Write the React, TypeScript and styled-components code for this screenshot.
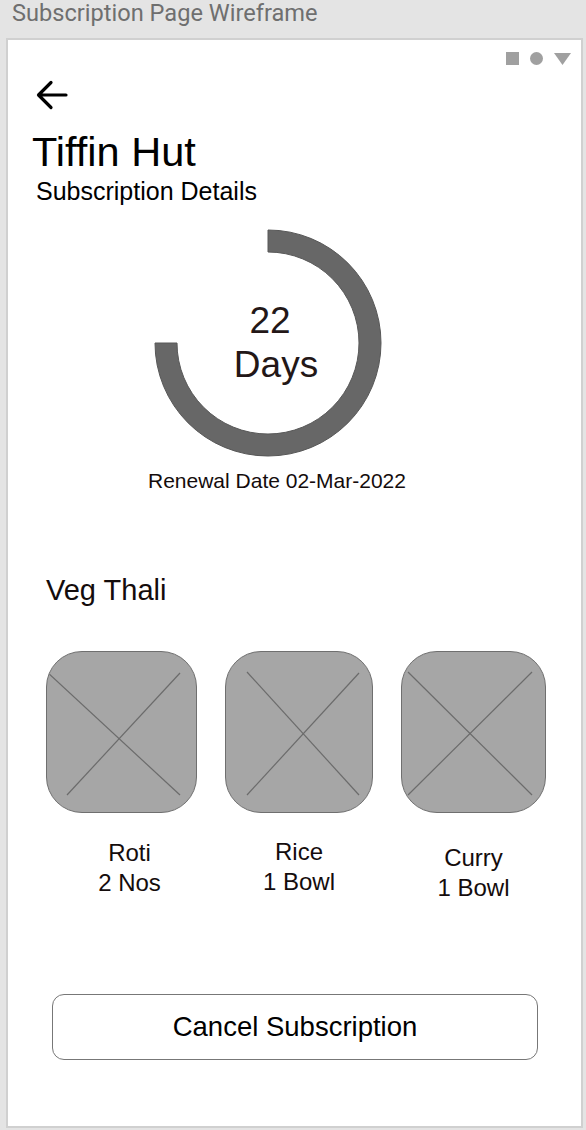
import styled, { createGlobalStyle } from "styled-components";

const GlobalStyle = createGlobalStyle`
  html, body {
    margin: 0;
    padding: 0;
    background: #e4e4e4;
  }
  body {
    font-family: "Liberation Sans", Arial, sans-serif;
  }
`;

type Meal = {
  name: string;
  qty: string;
  width: number;
  shift: number;
  drop: number;
  lines: number[][];
};

const meals: Meal[] = [
  { name: "Roti", qty: "2 Nos", width: 151, shift: 8, drop: 0, lines: [[1, 21, 134, 144], [134, 22, 21, 144]] },
  { name: "Rice", qty: "1 Bowl", width: 148, shift: 0, drop: -1, lines: [[22, 21, 134, 144], [134, 22, 22, 144]] },
  { name: "Curry", qty: "1 Bowl", width: 145, shift: 0, drop: 5, lines: [[7, 21, 131, 144], [131, 21, 7, 144]] },
];

const Page = styled.div`
  width: 586px;
  height: 1130px;
  display: flex;
  flex-direction: column;
  overflow: hidden;
`;

const PageTitle = styled.div`
  height: 38px;
  padding-left: 12px;
  font-family: Roboto, "Liberation Sans", sans-serif;
  font-size: 23.6px;
  line-height: 27px;
  color: #6f6f6f;
  box-sizing: border-box;
`;

const Frame = styled.div`
  margin-left: 6px;
  width: 577px;
  height: 1090px;
  box-sizing: border-box;
  border: 2px solid #d0d0d0;
  background: #fff;
  display: flex;
  flex-direction: column;
  padding-bottom: 66px;
`;

const StatusBar = styled.div`
  display: flex;
  justify-content: flex-end;
  align-items: center;
  gap: 11px;
  margin-top: 12px;
  padding-right: 10px;
  height: 13px;
`;

const StatusSquare = styled.span`
  width: 13px;
  height: 13px;
  background: #a0a0a0;
`;

const StatusDot = styled.span`
  width: 13px;
  height: 13px;
  border-radius: 50%;
  background: #a0a0a0;
`;

const BackButton = styled.button`
  display: flex;
  align-self: flex-start;
  margin: 15px 0 0 28px;
  padding: 0;
  border: none;
  background: none;
`;

const ShopName = styled.h1`
  margin: 19px 0 0 24px;
  font-size: 41.5px;
  line-height: 45px;
  font-weight: 400;
  color: #000;
`;

const SectionLabel = styled.div`
  margin: 3px 0 0 28px;
  font-size: 25px;
  line-height: 28px;
  color: #000;
`;

const Ring = styled.div`
  display: grid;
  width: 240px;
  height: 240px;
  margin: 18px 0 0 140px;

  & > * {
    grid-area: 1 / 1;
  }
`;

const RingText = styled.div`
  align-self: center;
  justify-self: center;
  display: flex;
  flex-direction: column;
  align-items: center;
  font-size: 37px;
  line-height: 44px;
  color: #231717;
`;

const RingLine = styled.span<{ $shift: number }>`
  padding-left: ${(p) => p.$shift * 2}px;
`;

const Renewal = styled.div`
  margin: 6px 0 0 140px;
  font-size: 21px;
  line-height: 24px;
  color: #140c0c;
`;

const PlanName = styled.h2`
  margin: 81px 0 0 38px;
  font-size: 29px;
  line-height: 33px;
  font-weight: 400;
  color: #140c0c;
`;

const TileRow = styled.div`
  display: flex;
  gap: 28px;
  margin: 44px 0 0 38px;
`;

const Item = styled.div<{ $width: number }>`
  display: flex;
  flex-direction: column;
  width: ${(p) => p.$width}px;
`;

const Tile = styled.div`
  height: 162px;
  box-sizing: border-box;
  border: 1px solid #6f6f6f;
  border-radius: 36px;
  background: #a6a6a6;
  overflow: hidden;

  svg {
    display: block;
  }
`;

const ItemLabel = styled.div<{ $shift: number; $drop: number }>`
  margin-top: ${(p) => 25 + p.$drop}px;
  padding-left: ${(p) => p.$shift * 2}px;
  text-align: center;
  font-size: 24px;
  line-height: 30px;
  color: #140c0c;
`;

const CancelButton = styled.button`
  margin: auto 0 0 44px;
  width: 486px;
  height: 66px;
  box-sizing: border-box;
  border: 1px solid #777;
  border-radius: 12px;
  background: #fff;
  font-family: "Liberation Sans", Arial, sans-serif;
  font-size: 27.5px;
  color: #000;
`;

const App = () => {
  return (
    <Page>
      <GlobalStyle />
      <PageTitle>Subscription Page Wireframe</PageTitle>
      <Frame>
        <StatusBar>
          <StatusSquare />
          <StatusDot />
          <svg width="17" height="12" viewBox="0 0 17 12">
            <polygon points="0,0 17,0 8.5,12" fill="#a0a0a0" />
          </svg>
        </StatusBar>
        <BackButton aria-label="Back">
          <svg width="32" height="30" viewBox="0 0 32 30">
            <path d="M30 15 H3 M15 2.5 L2.5 15 L15 27.5" fill="none" stroke="#000" strokeWidth="3.2" strokeLinecap="round" strokeLinejoin="round" />
          </svg>
        </BackButton>
        <ShopName>Tiffin Hut</ShopName>
        <SectionLabel>Subscription Details</SectionLabel>
        <Ring>
          <svg width="240" height="240" viewBox="0 0 240 240">
            <path d="M120 7 A113 113 0 1 1 7 120 L29 120 A91 91 0 1 0 120 29 Z" fill="#676767" stroke="#585858" strokeWidth="1" />
          </svg>
          <RingText>
            <RingLine $shift={2}>22</RingLine>
            <RingLine $shift={8}>Days</RingLine>
          </RingText>
        </Ring>
        <Renewal>Renewal Date 02-Mar-2022</Renewal>
        <PlanName>Veg Thali</PlanName>
        <TileRow>
          {meals.map((m) => (
            <Item key={m.name} $width={m.width}>
              <Tile>
                <svg width={m.width - 2} height="160" viewBox={`1 1 ${m.width - 2} 160`}>
                  {m.lines.map((l, i) => (
                    <line key={i} x1={l[0]} y1={l[1]} x2={l[2]} y2={l[3]} stroke="#6b6b6b" strokeWidth="1.2" />
                  ))}
                </svg>
              </Tile>
              <ItemLabel $shift={m.shift} $drop={m.drop}>
                {m.name}
                <br />
                {m.qty}
              </ItemLabel>
            </Item>
          ))}
        </TileRow>
        <CancelButton>Cancel Subscription</CancelButton>
      </Frame>
    </Page>
  );
};

export default App;
